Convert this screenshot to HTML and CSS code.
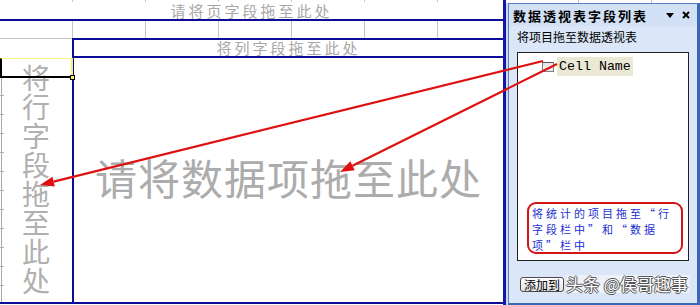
FILE: index.html
```html
<!DOCTYPE html>
<html lang="zh">
<head>
<meta charset="utf-8">
<link rel="stylesheet" href="styles.css">
</head>
<body>
<div class="screen">
  <div class="sheet">
    <div class="page-drop">请将页字段拖至此处</div>
    <div class="gap-row"></div>
    <div class="col-row">
      <div class="col-left"></div>
      <div class="col-drop">将列字段拖至此处</div>
    </div>
    <div class="body-row">
      <div class="row-drop">
        <div class="sel-cell"><span class="fill-handle"></span></div>
        <div class="row-text">将行字段拖至此处</div>
      </div>
      <div class="data-drop">请将数据项拖至此处</div>
    </div>
  </div>
  <div class="panel">
    <div class="panel-box">
      <div class="panel-title">
        <span class="title-text">数据透视表字段列表</span>
        <span class="title-icons">
          <svg width="10" height="8" viewBox="0 0 10 8"><polygon points="1,2 9,2 5,7" fill="#000"/></svg>
          <svg width="10" height="10" viewBox="0 0 10 10"><path d="M2 2 L8 8 M8 2 L2 8" stroke="#000" stroke-width="2"/></svg>
        </span>
      </div>
      <div class="panel-sub">将项目拖至数据透视表</div>
      <div class="field-list">
        <div class="field-item">
          <span class="check"></span>
          <span class="field-name">Cell Name</span>
        </div>
        <div class="note">将统计的项目拖至“行<br>字段栏中”和“数据<br>项”栏中</div>
      </div>
      <div class="panel-bottom">
        <span class="add-btn">添加到</span>
        <span class="area-box"><span class="watermark">头条 @侯哥趣事</span></span>
      </div>
    </div>
  </div>
  <svg class="arrows" width="700" height="305" viewBox="0 0 700 305">
    <line x1="543" y1="61" x2="53.6" y2="181.6" stroke="#e01010" stroke-width="2.2"/>
    <polygon points="40,185 54.8,186.5 52.4,176.8" fill="#e01010"/>
    <line x1="557" y1="64" x2="352.5" y2="165.8" stroke="#e01010" stroke-width="2.2"/>
    <polygon points="340,172 354.7,170.2 350.3,161.3" fill="#e01010"/>
  </svg>
</div>
</body>
</html>
```

FILE: styles.css
```css
* { box-sizing: border-box; }
html, body { margin: 0; padding: 0; background: #fff; }
body { width: 700px; height: 305px; overflow: hidden; font-family: "Noto Sans CJK SC", "Liberation Sans", sans-serif; }

.screen { position: relative; display: flex; width: 700px; height: 305px; }

.sheet {
  width: 506px;
  height: 305px;
  display: flex;
  flex-direction: column;
  border-right: 3px solid #1616a6;
  background: #fff;
}

.page-drop {
  height: 21px;
  padding-top: 3px;
  border-bottom: 2px solid #0c0c96;
  text-align: center;
  font-size: 15px;
  line-height: 16px;
  color: #a8a8a8;
  letter-spacing: 3px;
  background: linear-gradient(#fff, #fff) 0 2px / 100% 100% no-repeat,
              repeating-linear-gradient(to right, transparent 0 72px, #c4c4c4 72px 73px);
}

.gap-row {
  height: 17px;
  background: repeating-linear-gradient(to right, transparent 0 72px, #c4c4c4 72px 73px);
}

.col-row { display: flex; height: 20px; }
.col-left { width: 72px; border-top: 1px solid #c4c4c4; }
.col-drop {
  flex: 1;
  border: 2px solid #0c0c96;
  border-right: none;
  text-align: center;
  font-size: 15px;
  line-height: 16px;
  color: #a8a8a8;
  letter-spacing: 3px;
}

.body-row {
  display: flex;
  height: 246px;
  border-bottom: 2px solid #0c0c96;
}

.row-drop {
  position: relative;
  width: 72px;
  background:
    linear-gradient(#a8a8a8, #a8a8a8) 1px 0 / 1px 100% no-repeat,
    repeating-linear-gradient(to bottom, transparent 0 18px, #b4b4b4 18px 19px) 0 0 / 4px 100% no-repeat;
}
.sel-cell {
  position: absolute;
  left: 0;
  top: 0;
  width: 73px;
  height: 20px;
  border: 2px solid #000;
  border-top: 1px solid #f6f67a;
  border-right: 2px solid #f2f262;
  background: transparent;
  z-index: 2;
}
.fill-handle {
  position: absolute;
  right: -4px;
  bottom: -4px;
  width: 5px;
  height: 5px;
  background: #f2f262;
  border: 1px solid #000;
}
.row-text {
  writing-mode: vertical-rl;
  font-size: 28px;
  line-height: 28px;
  letter-spacing: 1px;
  color: #b0b0b0;
  margin: 6px 0 0 22px;
}

.data-drop {
  flex: 1;
  border-left: 2px solid #0c0c96;
  display: flex;
  align-items: center;
  justify-content: center;
  font-size: 42px;
  color: #acacac;
  letter-spacing: 1px;
  padding-bottom: 8px;
}

.panel {
  width: 194px;
  padding-top: 3px;
  background: repeating-linear-gradient(to right, transparent 0 72px, #c4c4c4 72px 73px);
}
.panel-box {
  margin-left: 2px;
  height: 302px;
  background: #dbe7f8;
  border: 1px solid #5b7fc0;
  border-right: 3px solid #3b67b4;
  border-bottom: 2px solid #3b67b4;
  display: flex;
  flex-direction: column;
  box-shadow: -2px 0 0 #c9d9f1;
}
.panel-title {
  height: 22px;
  display: flex;
  align-items: center;
  justify-content: space-between;
  padding: 0 6px 0 4px;
  background: #d2e1f6;
}
.title-text {
  font-size: 13px;
  font-weight: bold;
  letter-spacing: 2px;
  color: #000;
}
.title-icons { display: flex; align-items: center; gap: 6px; }
.title-icons svg { display: block; }

.panel-sub {
  height: 26px;
  padding: 3px 0 0 8px;
  font-size: 12px;
  line-height: 16px;
  color: #000;
}

.field-list {
  margin: 0 8px 0 8px;
  height: 209px;
  background: #fff;
  border: 1px solid #222;
  display: flex;
  flex-direction: column;
  padding: 4px 5px 6px 9px;
}
.field-item { display: flex; align-items: center; margin-left: 15px; height: 19px; }
.check {
  width: 12px;
  height: 10px;
  border: 1px solid #808080;
  border-top-color: #555;
  background: #e9e9e9;
  margin-right: 3px;
}
.field-name {
  font-family: "Liberation Mono", monospace;
  font-size: 13.3px;
  line-height: 19px;
  background: #ebe8d6;
  padding: 0 2px 0 2px;
  color: #000;
}

.note {
  margin-top: auto;
  height: 52px;
  border: 2px solid #d41414;
  border-radius: 9px;
  padding: 1px 0 0 3px;
  font-size: 11px;
  line-height: 16px;
  letter-spacing: 3px;
  color: #1c2fd0;
}

.panel-bottom {
  margin-top: 14px;
  display: flex;
  align-items: center;
  padding-left: 11px;
  height: 18px;
}
.add-btn {
  width: 44px;
  height: 15px;
  border: 1px solid #4a4a4a;
  border-radius: 3px;
  background: linear-gradient(#fff, #e2e2e2);
  font-size: 12px;
  line-height: 13px;
  text-align: center;
  color: #000;
}
.area-box {
  margin-left: 2px;
  height: 18px;
  width: 124px;
  background: #eef2f8;
  display: flex;
  align-items: center;
}
.watermark {
  font-size: 17px;
  line-height: 18px;
  color: #fdfdfd;
  white-space: nowrap;
  text-shadow: 1px 0 0 #555, -1px 0 0 #555, 0 1px 0 #555, 0 -1px 0 #555;
}

.arrows { position: absolute; left: 0; top: 0; pointer-events: none; z-index: 5; }
```
